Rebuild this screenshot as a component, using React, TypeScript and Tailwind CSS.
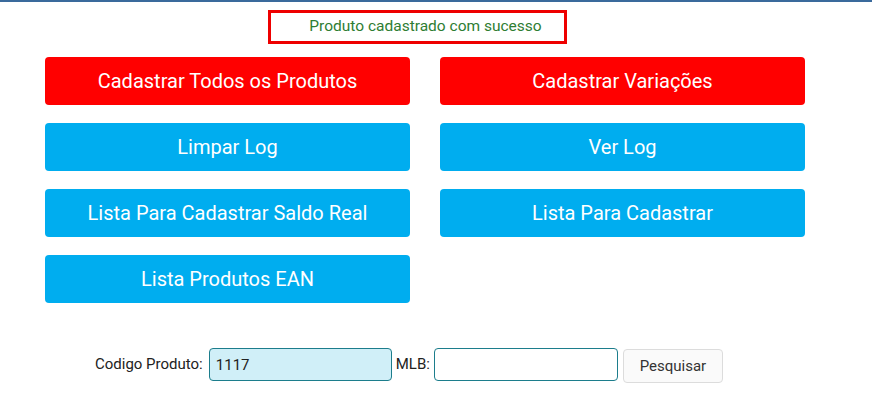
export default function App() {
  const buttons = [
    { label: 'Cadastrar Todos os Produtos', red: true },
    { label: 'Cadastrar Variações', red: true },
    { label: 'Limpar Log' },
    { label: 'Ver Log' },
    { label: 'Lista Para Cadastrar Saldo Real' },
    { label: 'Lista Para Cadastrar' },
    { label: 'Lista Produtos EAN' },
  ];

  return (
    <div className="min-h-[405px] bg-white border-t-2 border-[#3a6a9c]" style={{ fontFamily: 'Roboto, "Liberation Sans", sans-serif' }}>
      <div className="pt-[8px] ml-[268px] w-[299px]">
        <div className="h-[34px] border-[3px] border-[#e00] flex items-center justify-center pl-[16px] text-[15.5px] text-[#2e7d32]">
          Produto cadastrado com sucesso
        </div>
      </div>

      <div className="ml-[45px] w-[760px] mt-[13px] grid grid-cols-2 gap-x-[30px] gap-y-[18px]">
        {buttons.map((b) => (
          <button
            key={b.label}
            className={
              'h-[48px] rounded-[4px] text-white text-[20px] ' +
              (b.red ? 'bg-[#ff0000]' : 'bg-[#00adef]')
            }
          >
            {b.label}
          </button>
        ))}
      </div>

      <div className="mt-[43px] pl-[95px] flex items-center text-[15px] text-[#222]">
        <span>Codigo Produto:</span>
        <input
          defaultValue="1117"
          className="ml-[6px] w-[183px] h-[33px] px-[6px] rounded-[4px] border border-[#1c7d8c] bg-[#d0eff8] text-[15px] text-[#222] outline-none"
        />
        <span className="ml-[4px]">MLB:</span>
        <input className="ml-[4px] w-[184px] h-[33px] px-[6px] rounded-[4px] border border-[#1c7d8c] bg-white outline-none" />
        <button className="ml-[5px] mt-[3px] w-[100px] h-[34px] rounded-[4px] border border-[#dcdcdc] bg-[#fafafa] text-[15px] text-[#333]">
          Pesquisar
        </button>
      </div>
    </div>
  );
}
